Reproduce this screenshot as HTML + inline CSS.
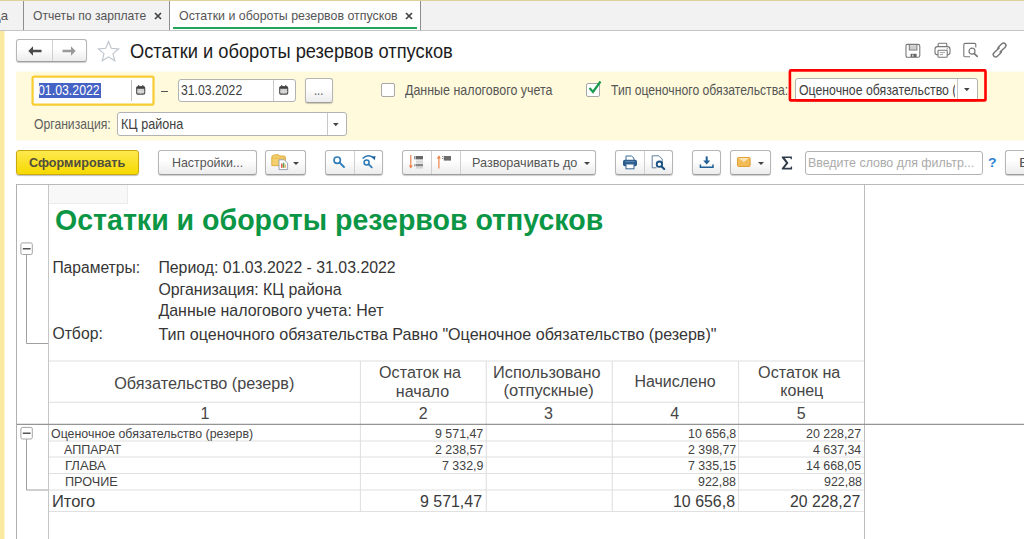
<!DOCTYPE html>
<html lang="ru"><head><meta charset="utf-8"><title>Остатки и обороты резервов отпусков</title>
<style>
html,body{margin:0;padding:0;background:#fff;}
html{overflow:hidden;width:1024px;height:539px;}
body{width:1024px;height:539px;position:relative;overflow:hidden;font-family:"Liberation Sans",sans-serif;}
.a{position:absolute;box-sizing:border-box;}
.t{position:absolute;white-space:nowrap;line-height:1;transform-origin:0 0;}
.btn{position:absolute;box-sizing:border-box;border:1px solid #b6b6b6;border-bottom-color:#9e9e9e;border-radius:3px;background:linear-gradient(#ffffff 40%,#ececec);box-shadow:0 1px 1px rgba(0,0,0,.2);}
.fld{position:absolute;box-sizing:border-box;border:1px solid #b2b2b2;border-radius:3px;background:#fff;}
.hl{position:absolute;height:1px;background:#dedede;}
.vl{position:absolute;width:1px;background:#dedede;}
svg{position:absolute;overflow:visible;}
</style></head><body>
<!-- tab bar -->
<div class="a" style="left:0;top:0;width:1024px;height:31px;background:#f2f2f2;border-bottom:1px solid #c4c4c4;"></div>
<div class="a" style="left:170px;top:1px;width:250px;height:29px;background:#fff;"></div>
<div class="a" style="left:0;top:0;width:1024px;height:1px;background:#dcd39a;"></div>
<div class="a" style="left:23px;top:1px;width:1px;height:29px;background:#8e8e8e;"></div>
<div class="a" style="left:169px;top:1px;width:1px;height:29px;background:#8e8e8e;"></div>
<div class="a" style="left:420px;top:1px;width:1px;height:29px;background:#8e8e8e;"></div>
<div class="a" style="left:173px;top:26.5px;width:244px;height:2.5px;background:#22a45a;"></div>
<svg style="left:154px;top:12px" width="8" height="8" viewBox="0 0 8 8"><path d="M1 1L7 7M7 1L1 7" stroke="#444" stroke-width="1.7" fill="none"/></svg>
<svg style="left:405px;top:12px" width="8" height="8" viewBox="0 0 8 8"><path d="M1 1L7 7M7 1L1 7" stroke="#444" stroke-width="1.7" fill="none"/></svg>
<!-- left strip -->
<div class="a" style="left:0;top:31px;width:4px;height:508px;background:#fae99f;"></div>
<div class="a" style="left:4px;top:31px;width:1px;height:508px;background:#fdf4cf;"></div>

<!-- nav buttons -->
<div class="btn" style="left:16px;top:39px;width:71px;height:23px;"></div>
<div class="a" style="left:52px;top:40px;width:1px;height:21px;background:#d0d0d0;"></div>
<svg style="left:27.5px;top:46px" width="14" height="10" viewBox="0 0 14 10"><path d="M5 0.3L0.3 5L5 9.7V6.2H13.5V3.8H5Z" fill="#4a4a4a"/></svg>
<svg style="left:62px;top:46px" width="14" height="10" viewBox="0 0 14 10"><path d="M9 0.3L13.7 5L9 9.7V6.2H0.5V3.8H9Z" fill="#9a9a9a"/></svg>
<!-- star -->
<svg style="left:97px;top:40px" width="23" height="22" viewBox="0 0 23 22"><path d="M11.5 1.5L14.3 8.3L21.6 8.9L16 13.6L17.8 20.7L11.5 16.8L5.2 20.7L7 13.6L1.4 8.9L8.7 8.3Z" fill="#fff" stroke="#bcc3ca" stroke-width="1.1" stroke-linejoin="miter"/></svg>
<!-- right icons -->
<svg style="left:905px;top:43px" width="16" height="16" viewBox="0 0 16 16"><path d="M2.2 1.4H13Q14.8 1.4 14.8 3.2V12.4Q14.8 14.2 13 14.2H2.2Q1 14.2 1 12.6V2.8Q1 1.4 2.2 1.4Z" fill="#fff" stroke="#777" stroke-width="1.1"/><rect x="4.3" y="1.6" width="7.6" height="5.4" fill="#e4e4e4" stroke="#777" stroke-width="1"/><path d="M6 3V6M8 3V6M10 3V6" stroke="#aaa" stroke-width="0.8"/><rect x="5.6" y="10.8" width="6" height="3.4" fill="#666"/><rect x="7" y="11.6" width="1.6" height="2" fill="#ccc"/></svg>
<svg style="left:934px;top:42px" width="17" height="16" viewBox="0 0 17 16"><rect x="4.2" y="1.3" width="8.6" height="4" rx="0.8" fill="#fff" stroke="#777" stroke-width="1.1"/><rect x="1" y="4.6" width="15" height="8.2" rx="2.6" fill="#fff" stroke="#777" stroke-width="1.1"/><rect x="4" y="8.2" width="9.2" height="7" rx="0.8" fill="#fff" stroke="#777" stroke-width="1.1"/><path d="M5.8 10.6H11M5.8 12.6H9" stroke="#999" stroke-width="0.9"/><rect x="12.6" y="6.2" width="1.4" height="1.2" fill="#999"/></svg>
<svg style="left:962px;top:42px" width="17" height="16" viewBox="0 0 17 16"><path d="M13.8 5.6V2.8Q13.8 1.4 12.4 1.4H3.2Q1.8 1.4 1.8 2.8V13.4Q1.8 14.8 3.2 14.8H8" fill="none" stroke="#777" stroke-width="1.1"/><circle cx="10" cy="9.2" r="3" fill="#fff" stroke="#777" stroke-width="1.2"/><path d="M12.3 11.6L15.2 14.4" stroke="#777" stroke-width="1.7" stroke-linecap="round"/></svg>
<svg style="left:990px;top:41px" width="19" height="18" viewBox="0 0 19 18"><g transform="translate(9.6,9) rotate(-44) scale(1.1)" fill="none" stroke="#777" stroke-width="1.3"><path d="M1.6 -1.7H-5.4A2.2 2.2 0 0 0 -5.4 2.7H-1.2A2.2 2.2 0 0 0 0.9 1.2"/><path d="M-1.6 1.7H5.4A2.2 2.2 0 0 0 5.4 -2.7H1.2A2.2 2.2 0 0 0 -0.9 -1.2"/></g></svg>

<!-- yellow panel -->
<svg style="left:0;top:0" width="1024" height="150"><rect x="16" y="71.6" width="1008" height="69" fill="#fffadb"/></svg>
<!-- date 1 (focused) -->
<svg style="left:0;top:0" width="200" height="120"><rect x="32.6" y="76.6" width="120.9" height="28" rx="1.5" fill="#fff" stroke="#f8cc33" stroke-width="2.2"/></svg>
<div class="a" style="left:38.5px;top:82.5px;width:62px;height:15px;background:#4562c5;"></div>
<div class="a" style="left:130.5px;top:80px;width:1.5px;height:21px;background:#c0c0c0;"></div>
<svg style="left:136px;top:85px" width="10" height="10" viewBox="0 0 10 10"><rect x="0.7" y="1.7" width="8" height="7.4" rx="1.2" fill="#cfcfcf" stroke="#4a4a4a" stroke-width="1.1"/><rect x="0.7" y="1.5" width="8" height="2.3" rx="0.8" fill="#3f3f3f"/><rect x="2" y="0.2" width="1.3" height="2" fill="#4a4a4a"/><rect x="6.1" y="0.2" width="1.3" height="2" fill="#4a4a4a"/><path d="M4.7 4V9M1 6.4H8.4" stroke="#e2e2e2" stroke-width="0.6"/></svg>
<div class="a" style="left:161px;top:90.8px;width:7px;height:1.3px;background:#555;"></div>
<!-- date 2 -->
<div class="fld" style="left:178px;top:79px;width:118px;height:23px;"></div>
<div class="a" style="left:273px;top:80px;width:1px;height:21px;background:#c8c8c8;"></div>
<svg style="left:279px;top:85px" width="10" height="10" viewBox="0 0 10 10"><rect x="0.7" y="1.7" width="8" height="7.4" rx="1.2" fill="#cfcfcf" stroke="#4a4a4a" stroke-width="1.1"/><rect x="0.7" y="1.5" width="8" height="2.3" rx="0.8" fill="#3f3f3f"/><rect x="2" y="0.2" width="1.3" height="2" fill="#4a4a4a"/><rect x="6.1" y="0.2" width="1.3" height="2" fill="#4a4a4a"/><path d="M4.7 4V9M1 6.4H8.4" stroke="#e2e2e2" stroke-width="0.6"/></svg>
<!-- ... button -->
<div class="btn" style="left:305px;top:78px;width:28px;height:25px;"></div>
<!-- checkboxes -->
<div class="a" style="left:381px;top:83px;width:14px;height:14px;border:1px solid #a8a8a8;border-radius:2px;background:#fff;"></div>
<div class="a" style="left:586px;top:83px;width:14px;height:14px;border:1px solid #a8a8a8;border-radius:2px;background:#fff;"></div>
<svg style="left:588px;top:80px" width="14" height="15" viewBox="0 0 14 15"><path d="M1.5 8L5 12L12.5 1.5" fill="none" stroke="#1a9b50" stroke-width="2.2"/></svg>
<!-- type field + red frame -->
<div class="fld" style="left:795px;top:78px;width:183px;height:24px;"></div>
<svg style="left:963.9px;top:88px" width="5.6" height="3.4" viewBox="0 0 7 4"><path d="M0 0H7L3.5 4Z" fill="#444"/></svg>
<!-- org field -->
<div class="fld" style="left:117px;top:112px;width:230px;height:24px;"></div>
<div class="a" style="left:326.5px;top:113px;width:1px;height:22px;background:#c8c8c8;"></div>
<svg style="left:333.2px;top:122.6px" width="5.6" height="3.4" viewBox="0 0 7 4"><path d="M0 0H7L3.5 4Z" fill="#444"/></svg>

<!-- toolbar -->
<div class="a" style="left:16px;top:150px;width:123px;height:25px;border:1px solid #c9a90c;border-radius:3px;background:linear-gradient(#fde94e,#f6d900);box-shadow:0 1px 1px rgba(0,0,0,.25);"></div>
<div class="btn" style="left:158px;top:150px;width:99px;height:25px;"></div>
<div class="btn" style="left:265px;top:150px;width:41px;height:25px;"></div>
<div class="btn" style="left:325px;top:150px;width:58px;height:25px;"></div>
<div class="a" style="left:354px;top:151px;width:1px;height:23px;background:#cfcfcf;"></div>
<div class="btn" style="left:402px;top:150px;width:194px;height:25px;"></div>
<div class="a" style="left:431px;top:151px;width:1px;height:23px;background:#cfcfcf;"></div>
<div class="a" style="left:460px;top:151px;width:1px;height:23px;background:#cfcfcf;"></div>
<div class="btn" style="left:615px;top:150px;width:58px;height:25px;"></div>
<div class="a" style="left:644px;top:151px;width:1px;height:23px;background:#cfcfcf;"></div>
<div class="btn" style="left:692px;top:150px;width:29px;height:25px;"></div>
<div class="btn" style="left:730px;top:150px;width:41px;height:25px;"></div>
<div class="fld" style="left:805px;top:151px;width:178px;height:24px;"></div>
<div class="btn" style="left:1005px;top:150px;width:19px;height:25px;border-right:none;border-radius:3px 0 0 3px;"></div>

<!-- folder/doc icon -->
<svg style="left:271px;top:154px" width="18" height="17" viewBox="0 0 18 17"><path d="M0.8 3.2Q0.8 1.6 2.4 1.2L6.5 0.6Q8 0.6 8.4 2H13Q14.4 2 14.4 3.4V11.6H0.8Z" fill="#f5cf6e" stroke="#d9a637" stroke-width="0.9"/><path d="M1.2 4.2H14" stroke="#e3b54c" stroke-width="0.8"/><path d="M8 5.8H13.2L16.6 9V15.6H8Z" fill="#fff" stroke="#8d9bb0" stroke-width="0.9"/><rect x="10" y="9.6" width="1.6" height="4.2" fill="#e45a4a"/><rect x="11.9" y="8.6" width="1.5" height="5.2" fill="#5aa85a"/><rect x="13.6" y="10.6" width="1.2" height="3.2" fill="#e8a048"/></svg>
<svg style="left:293px;top:162px" width="6" height="3" viewBox="0 0 6 3"><path d="M0 0H6L3 3Z" fill="#444"/></svg>
<!-- search -->
<svg style="left:332px;top:155px" width="15" height="15" viewBox="0 0 15 15"><circle cx="5.2" cy="5.2" r="3.2" fill="none" stroke="#2f7dba" stroke-width="1.6"/><path d="M7.6 7.6L12 12" stroke="#2f7dba" stroke-width="1.9" stroke-linecap="round"/></svg>
<!-- search next -->
<svg style="left:361px;top:154px" width="16" height="15" viewBox="0 0 16 15"><path d="M1.6 4.6Q6.6 -0.6 12.4 3.6" fill="none" stroke="#2b78b5" stroke-width="1.5"/><path d="M10.4 2.6L14.6 2.2L13.6 6.2Z" fill="#1d5f9a"/><circle cx="5.6" cy="8.6" r="2.5" fill="none" stroke="#2b78b5" stroke-width="1.5"/><path d="M7.6 10.4L10.8 13.4" stroke="#2b78b5" stroke-width="1.7" stroke-linecap="round"/></svg>
<!-- sort down -->
<svg style="left:408px;top:155px" width="17" height="15" viewBox="0 0 17 15"><path d="M2.8 0V11" stroke="#ee7a3e" stroke-width="1.1"/><path d="M0.8 10.4H4.8L2.8 13.6Z" fill="#ee7a3e"/><rect x="6.4" y="1" width="1" height="3.4" fill="#555"/><rect x="8" y="1" width="7" height="3.4" fill="#666"/><rect x="8" y="5.6" width="7" height="1" fill="#c2c2c2"/><rect x="8" y="7.4" width="7" height="1" fill="#c2c2c2"/><rect x="6.4" y="9" width="1" height="2.4" fill="#777"/><rect x="8" y="9" width="7" height="2.4" fill="#888"/><rect x="8" y="12.4" width="7" height="1" fill="#c2c2c2"/></svg>
<!-- sort up -->
<svg style="left:436px;top:155px" width="17" height="15" viewBox="0 0 17 15"><path d="M2.9 2.6V13.6" stroke="#ee7a3e" stroke-width="1.1"/><path d="M0.9 3.4H4.9L2.9 0.2Z" fill="#ee7a3e"/><rect x="6.2" y="1" width="1" height="1" fill="#777"/><rect x="6.2" y="3" width="1" height="1" fill="#777"/><rect x="7.8" y="1" width="7.2" height="4.6" fill="#6c6c6c"/></svg>
<svg style="left:584px;top:162px" width="6" height="3" viewBox="0 0 6 3"><path d="M0 0H6L3 3Z" fill="#444"/></svg>
<!-- printer -->
<svg style="left:622px;top:155px" width="16" height="15" viewBox="0 0 16 15"><path d="M4 5V1H9.6L12 3.2V5" fill="#fff" stroke="#3b6a98" stroke-width="1"/><rect x="1" y="4.8" width="14" height="6.4" rx="1.8" fill="#2d5d8c"/><path d="M3.4 6.6H12.6" stroke="#6d93b8" stroke-width="0.9"/><rect x="4" y="9" width="8" height="4.8" fill="#fff" stroke="#3b6a98" stroke-width="1"/></svg>
<!-- preview -->
<svg style="left:651px;top:155px" width="15" height="15" viewBox="0 0 15 15"><path d="M1.2 0.8H8L11.2 4V8M1.2 0.8V12.8H5.5" fill="none" stroke="#5f7f9f" stroke-width="1"/><circle cx="8.4" cy="9.2" r="2.7" fill="#fff" stroke="#174f82" stroke-width="1.8"/><path d="M10.6 11.4L13.2 14" stroke="#174f82" stroke-width="2.1" stroke-linecap="round"/></svg>
<!-- download -->
<svg style="left:699px;top:156px" width="16" height="13" viewBox="0 0 16 13"><path d="M7.7 0.4V6" stroke="#1f5f95" stroke-width="2"/><path d="M4.2 4.6H11.2L7.7 8.6Z" fill="#1f5f95"/><path d="M1.4 8.6V11.2H14V8.6" fill="none" stroke="#1f5f95" stroke-width="1.5"/></svg>
<!-- mail -->
<svg style="left:737.2px;top:157.2px" width="14" height="10.3" viewBox="0 0 15 11"><rect x="0.5" y="0.5" width="13.6" height="9.6" rx="1.2" fill="#f3bd58" stroke="#dc9a2c" stroke-width="1"/><path d="M1 1L7.3 6.2L13.6 1" fill="#fae3b0" stroke="#e9b04a" stroke-width="0.8"/><path d="M1 9.6L5.4 5M13.6 9.6L9.2 5" stroke="#e9b04a" stroke-width="0.8" fill="none"/></svg>
<svg style="left:758px;top:162px" width="6" height="3" viewBox="0 0 6 3"><path d="M0 0H6L3 3Z" fill="#444"/></svg>
<!-- sigma -->
<svg style="left:781px;top:156px" width="12" height="14" viewBox="0 0 12 14"><path d="M0.8 0.5H10.9V3.2H9.6V2.1H3.8L7.5 6.9L3.6 11.8H9.8V10.5H11.1V13.5H0.8V12.2L5 6.9L0.8 1.8Z" fill="#2f3b48"/></svg>


<!-- report area -->
<div class="a" style="left:16px;top:184px;width:1008px;height:1px;background:#b9b9b9;"></div>
<div class="a" style="left:16px;top:184px;width:1px;height:355px;background:#b0b0b0;"></div>
<div class="a" style="left:48px;top:185px;width:1px;height:354px;background:#c6c6c6;"></div>
<div class="a" style="left:49px;top:185px;width:79px;height:19px;background:#f8f8f8;border-right:1px solid #ebebeb;border-bottom:1px solid #ebebeb;"></div>
<div class="a" style="left:864px;top:185px;width:1px;height:354px;background:#bcbcbc;"></div>
<!-- group markers + grid (svg for subpixel lines) -->
<svg style="left:0;top:0" width="1024" height="539" shape-rendering="auto">
<g stroke="#a0a0a0" stroke-width="1" fill="none">
<path d="M26.5 254V343.5H48"/>
<path d="M26.5 439V490H48"/>
<rect x="20.9" y="242.9" width="11.4" height="11.6" rx="1.5" fill="#fff" stroke="#a4a4a4"/>
<rect x="20.9" y="427.4" width="11.4" height="11.6" rx="1.5" fill="#fff" stroke="#a4a4a4"/>
</g>
<path d="M22.8 248.7H30.6M22.8 433.2H30.6" stroke="#555" stroke-width="1.5"/>
<g stroke="#e0e0e0" stroke-width="1.1">
<path d="M49 361H864M49 402.3H864M49 441H864M49 457H864M49 473.5H864M49 490H864M49 511.5H864"/>
<path d="M360.4 361V511.5M486.3 361V511.5M612.3 361V511.5M738.5 361V511.5"/>
</g>
<path d="M17 424.4H1024" stroke="#949494" stroke-width="1.1"/>
</svg>

<span class="t" style="left:-6.90px;top:9.00px;font-size:13.5px;color:#555;transform:scaleX(0.9746);">да</span>
<span class="t" style="left:33.40px;top:9.00px;font-size:13.5px;color:#555;transform:scaleX(0.8974);">Отчеты по зарплате</span>
<span class="t" style="left:179.40px;top:9.00px;font-size:13.5px;color:#555;transform:scaleX(0.9178);">Остатки и обороты резервов отпусков</span>
<span class="t" style="left:129.80px;top:40.80px;font-size:20px;color:#1c1c1c;transform:scaleX(0.9144);">Остатки и обороты резервов отпусков</span>
<span class="t" style="left:38.40px;top:83.00px;font-size:14.5px;color:#fff;transform:scaleX(0.8501);">01.03.2022</span>
<span class="t" style="left:181.40px;top:83.00px;font-size:14.5px;color:#404040;transform:scaleX(0.8432);">31.03.2022</span>
<span class="t" style="left:314.40px;top:83.00px;font-size:14.5px;color:#555;transform:scaleX(0.7607);">...</span>
<span class="t" style="left:405.40px;top:83.00px;font-size:14.5px;color:#555;transform:scaleX(0.8585);">Данные налогового учета</span>
<span class="t" style="left:611.40px;top:83.00px;font-size:14.5px;color:#555;transform:scaleX(0.8406);">Тип оценочного обязательства:</span>
<span class="t clipr" style="left:799.40px;top:82.60px;font-size:14.5px;color:#404040;transform:scaleX(0.8477);">Оценочное обязательство (</span>
<span class="t" style="left:34.40px;top:116.50px;font-size:14.5px;color:#606060;transform:scaleX(0.8384);">Организация:</span>
<span class="t" style="left:120.90px;top:116.50px;font-size:14.5px;color:#404040;transform:scaleX(0.8690);">КЦ района</span>
<span class="t" style="left:29.40px;top:155.70px;font-size:13.5px;color:#504e3c;font-weight:bold;transform:scaleX(0.9354);">Сформировать</span>
<span class="t" style="left:171.90px;top:156.00px;font-size:13.5px;color:#555;transform:scaleX(0.9193);">Настройки...</span>
<span class="t" style="left:471.90px;top:156.00px;font-size:13.5px;color:#555;transform:scaleX(0.9368);">Разворачивать до</span>
<span class="t" style="left:808.40px;top:156.00px;font-size:13.5px;color:#aaa;transform:scaleX(0.9193);">Введите слово для фильтр...</span>
<span class="t" style="left:987.80px;top:156.00px;font-size:13.5px;color:#2a7fd0;font-weight:bold;transform:scaleX(1.0424);">?</span>
<span class="t" style="left:1018.90px;top:156.00px;font-size:13.5px;color:#555;transform:scaleX(1.1314);">Е</span>
<span class="t" style="left:55.40px;top:205.30px;font-size:29.5px;color:#0b9646;font-weight:bold;transform:scaleX(0.9671);">Остатки и обороты резервов отпусков</span>
<span class="t" style="left:52.40px;top:259.79px;font-size:15.64px;color:#363636;">Параметры:</span>
<span class="t" style="left:158.40px;top:259.61px;font-size:15.87px;color:#363636;">Период: 01.03.2022 - 31.03.2022</span>
<span class="t" style="left:158.40px;top:281.58px;font-size:15.9px;color:#363636;">Организация: КЦ района</span>
<span class="t" style="left:158.40px;top:303.33px;font-size:15.96px;color:#363636;">Данные налогового учета: Нет</span>
<span class="t" style="left:52.40px;top:325.90px;font-size:15.75px;color:#363636;">Отбор:</span>
<span class="t" style="left:158.40px;top:325.62px;font-size:16.1px;color:#363636;">Тип оценочного обязательства Равно &quot;Оценочное обязательство (резерв)&quot;</span>
<span class="t" style="left:114.20px;top:374.81px;font-size:16.24px;color:#464646;">Обязательство (резерв)</span>
<span class="t" style="left:379.10px;top:363.90px;font-size:16.12px;color:#464646;">Остаток на</span>
<span class="t" style="left:395.80px;top:383.44px;font-size:16.08px;color:#464646;">начало</span>
<span class="t" style="left:493.10px;top:363.75px;font-size:16.31px;color:#464646;">Использовано</span>
<span class="t" style="left:503.60px;top:383.06px;font-size:16.54px;color:#464646;">(отпускные)</span>
<span class="t" style="left:634.40px;top:373.99px;font-size:16.01px;color:#464646;">Начислено</span>
<span class="t" style="left:758.10px;top:363.85px;font-size:16.18px;color:#464646;">Остаток на</span>
<span class="t" style="left:780.30px;top:383.49px;font-size:16.01px;color:#464646;">конец</span>
<span class="t" style="left:200.55px;top:406.00px;font-size:16px;color:#464646;">1</span>
<span class="t" style="left:418.75px;top:406.00px;font-size:16px;color:#464646;">2</span>
<span class="t" style="left:544.05px;top:406.00px;font-size:16px;color:#464646;">3</span>
<span class="t" style="left:670.25px;top:406.00px;font-size:16px;color:#464646;">4</span>
<span class="t" style="left:796.85px;top:406.00px;font-size:16px;color:#464646;">5</span>
<span class="t" style="left:51.40px;top:426.60px;font-size:13.2px;color:#424242;transform:scaleX(0.9395);">Оценочное обязательство (резерв)</span>
<span class="t" style="left:64.40px;top:442.80px;font-size:13.2px;color:#424242;transform:scaleX(0.9511);">АППАРАТ</span>
<span class="t" style="left:64.90px;top:459.00px;font-size:13.2px;color:#424242;transform:scaleX(0.9923);">ГЛАВА</span>
<span class="t" style="left:64.90px;top:475.40px;font-size:13.2px;color:#424242;transform:scaleX(0.9576);">ПРОЧИЕ</span>
<span class="t" style="left:434.74px;top:426.60px;font-size:13.2px;color:#424242;transform:scaleX(0.9400);">9 571,47</span>
<span class="t" style="left:687.54px;top:426.60px;font-size:13.2px;color:#424242;transform:scaleX(0.9400);">10 656,8</span>
<span class="t" style="left:806.35px;top:426.60px;font-size:13.2px;color:#424242;transform:scaleX(0.9400);">20 228,27</span>
<span class="t" style="left:434.74px;top:442.80px;font-size:13.2px;color:#424242;transform:scaleX(0.9400);">2 238,57</span>
<span class="t" style="left:687.54px;top:442.80px;font-size:13.2px;color:#424242;transform:scaleX(0.9400);">2 398,77</span>
<span class="t" style="left:813.24px;top:442.80px;font-size:13.2px;color:#424242;transform:scaleX(0.9400);">4 637,34</span>
<span class="t" style="left:441.64px;top:459.00px;font-size:13.2px;color:#424242;transform:scaleX(0.9400);">7 332,9</span>
<span class="t" style="left:687.54px;top:459.00px;font-size:13.2px;color:#424242;transform:scaleX(0.9400);">7 335,15</span>
<span class="t" style="left:806.35px;top:459.00px;font-size:13.2px;color:#424242;transform:scaleX(0.9400);">14 668,05</span>
<span class="t" style="left:697.88px;top:475.40px;font-size:13.2px;color:#424242;transform:scaleX(0.9400);">922,88</span>
<span class="t" style="left:823.58px;top:475.40px;font-size:13.2px;color:#424242;transform:scaleX(0.9400);">922,88</span>
<span class="t" style="left:52.40px;top:493.50px;font-size:16.6px;color:#3a3a3a;transform:scaleX(0.9931);">Итого</span>
<span class="t" style="left:419.70px;top:494.00px;font-size:16.6px;color:#3a3a3a;transform:scaleX(0.9598);">9 571,47</span>
<span class="t" style="left:672.60px;top:494.00px;font-size:16.6px;color:#3a3a3a;transform:scaleX(0.9598);">10 656,8</span>
<span class="t" style="left:789.90px;top:494.00px;font-size:16.6px;color:#3a3a3a;transform:scaleX(0.9509);">20 228,27</span>
<div class="a" style="left:955px;top:80px;width:2px;height:19px;background:#fff;"></div>
<div class="a" style="left:956.6px;top:79px;width:1.4px;height:22px;background:#c6c6c6;"></div>
<svg style="left:0;top:0" width="1024" height="120"><rect x="789.9" y="70.4" width="195.6" height="30" rx="1" fill="none" stroke="#ff0000" stroke-width="2.6"/></svg>
</body></html>
